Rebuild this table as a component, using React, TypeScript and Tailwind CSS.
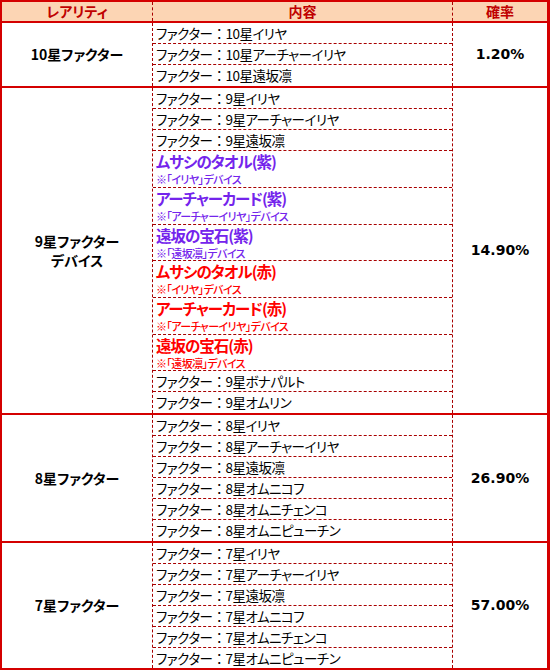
import React from 'react';

type Row =
  | { kind: 'plain'; text: string; h: number }
  | { kind: 'device'; title: string; note: string; color: string; h: number };

type Group = { label: string[]; rate: string; rows: Row[] };

const PURPLE = 'text-[#7424ec]';
const RED = 'text-[#ff0000]';

const plain = (text: string, h = 21): Row => ({ kind: 'plain', text, h });
const device = (title: string, note: string, color: string, h: number): Row => ({ kind: 'device', title, note, color, h });

const groups: Group[] = [
  {
    label: ['10星ファクター'],
    rate: '1.20%',
    rows: [plain('10星イリヤ'), plain('10星アーチャーイリヤ'), plain('10星遠坂凛')],
  },
  {
    label: ['9星ファクター', 'デバイス'],
    rate: '14.90%',
    rows: [
      plain('9星イリヤ'),
      plain('9星アーチャーイリヤ'),
      plain('9星遠坂凛'),
      device('ムサシのタオル(紫)', '※「イリヤ」デバイス', PURPLE, 37),
      device('アーチャーカード(紫)', '※「アーチャーイリヤ」デバイス', PURPLE, 37),
      device('遠坂の宝石(紫)', '※「遠坂凛」デバイス', PURPLE, 36),
      device('ムサシのタオル(赤)', '※「イリヤ」デバイス', RED, 37),
      device('アーチャーカード(赤)', '※「アーチャーイリヤ」デバイス', RED, 37),
      device('遠坂の宝石(赤)', '※「遠坂凛」デバイス', RED, 36),
      plain('9星ボナパルト'),
      plain('9星オムリン'),
    ],
  },
  {
    label: ['8星ファクター'],
    rate: '26.90%',
    rows: [
      plain('8星イリヤ'),
      plain('8星アーチャーイリヤ'),
      plain('8星遠坂凛'),
      plain('8星オムニコフ'),
      plain('8星オムニチェンコ'),
      plain('8星オムニピューチン'),
    ],
  },
  {
    label: ['7星ファクター'],
    rate: '57.00%',
    rows: [
      plain('7星イリヤ'),
      plain('7星アーチャーイリヤ'),
      plain('7星遠坂凛'),
      plain('7星オムニコフ'),
      plain('7星オムニチェンコ'),
      plain('7星オムニピューチン', 20),
    ],
  },
];

export default function App() {
  return (
    <div className="w-[550px] h-[670px] bg-white font-['Noto_Sans_CJK_JP',sans-serif] [font-feature-settings:'palt'] text-black">
      <div className="border-t-2 border-l-2 border-r-[3px] border-b-2 border-[#d40000]">
        {/* Header */}
        <div className="flex h-[19px] bg-[#fcd5b4] text-[14px] font-bold text-[#c00000] leading-[19px]">
          <div className="w-[150px] text-center">レアリティ</div>
          <div className="w-[301px] border-x border-dashed border-[#a80000] text-center">内容</div>
          <div className="flex-1 text-center">確率</div>
        </div>

        {groups.map((g, gi) => (
          <div key={gi} className="flex border-t-2 border-[#d40000]">
            <div className="w-[150px] flex flex-col items-center justify-center text-[14px] font-bold leading-[19px]">
              {g.label.map((l, i) => (
                <div key={i}>{l}</div>
              ))}
            </div>

            <div className="w-[301px] border-x border-dashed border-[#a80000] flex flex-col">
              {g.rows.map((r, ri) => {
                const last = ri === g.rows.length - 1;
                const sep = last ? '' : 'border-b border-dashed border-[#a80000]';
                if (r.kind === 'plain') {
                  return (
                    <div key={ri} className={`${sep} pl-[3px] text-[13.5px] tracking-[-0.5px] leading-[20px] whitespace-nowrap`} style={{ height: r.h }}>
                      ファクター<span className="[font-feature-settings:normal]">：</span>{r.text}
                    </div>
                  );
                }
                return (
                  <div key={ri} className={`${sep} pl-[3px] ${r.color} whitespace-nowrap`} style={{ height: r.h }}>
                    <div className="text-[15.5px] font-bold tracking-[-1px] leading-[21px]">{r.title}</div>
                    <div className="text-[11px] font-medium tracking-[-0.6px] leading-[14px]">{r.note}</div>
                  </div>
                );
              })}
            </div>

            <div className="flex-1 flex items-center justify-center font-['DejaVu_Sans',sans-serif] text-[14px] font-bold">
              {g.rate}
            </div>
          </div>
        ))}
      </div>
    </div>
  );
}
